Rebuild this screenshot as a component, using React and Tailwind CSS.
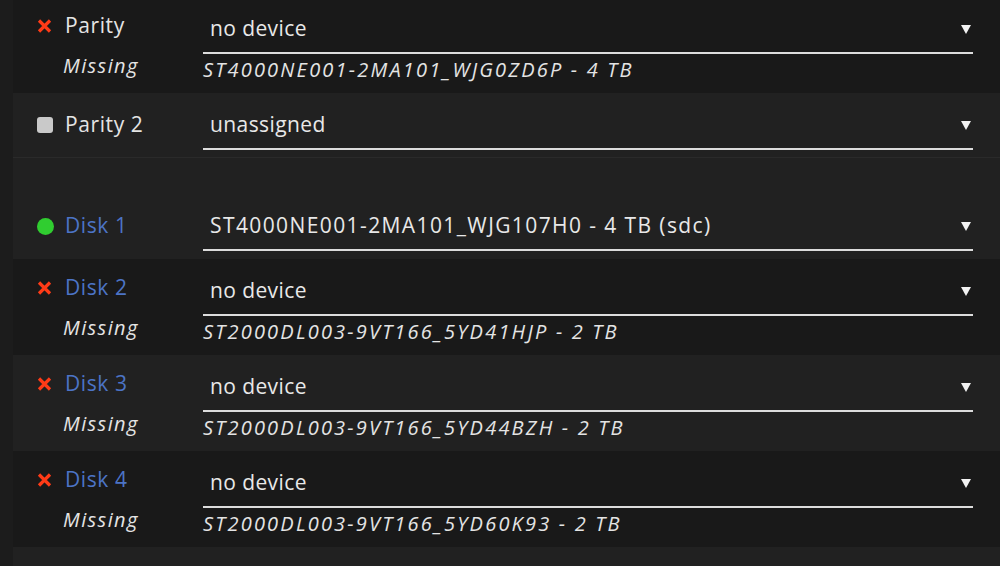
import React from "react";

const rows = [
  { label: "Parity", status: "missing", value: "no device", sub: "ST4000NE001-2MA101_WJG0ZD6P - 4 TB", dark: true },
  { label: "Parity 2", status: "empty", value: "unassigned", light: true, border: true },
  { gap: true },
  { label: "Disk 1", status: "ok", value: "ST4000NE001-2MA101_WJG107H0 - 4 TB (sdc)", named: true, disk: true },
  { label: "Disk 2", status: "missing", value: "no device", sub: "ST2000DL003-9VT166_5YD41HJP - 2 TB", disk: true, dark: true },
  { label: "Disk 3", status: "missing", value: "no device", sub: "ST2000DL003-9VT166_5YD44BZH - 2 TB", disk: true },
  { label: "Disk 4", status: "missing", value: "no device", sub: "ST2000DL003-9VT166_5YD60K93 - 2 TB", disk: true, dark: true },
];

const StatusIcon = ({ status }) => {
  if (status === "missing")
    return (
      <svg width="18" height="14" viewBox="0 0 18 14">
        <path d="M3 1.5 L14 12.5 M14 1.5 L3 12.5" stroke="#ff3b17" strokeWidth="3.2" strokeLinecap="butt" />
      </svg>
    );
  if (status === "empty") return <div className="w-[16px] h-[16px] rounded-[3px] bg-[#c9c9c9]" />;
  return <div className="w-[17px] h-[17px] rounded-full bg-[#30cd30]" />;
};

const Arrow = () => (
  <svg width="10" height="9" viewBox="0 0 10 9">
    <polygon points="0,0 10,0 5,9" fill="#f2f2f2" />
  </svg>
);

const Row = ({ row }) => {
  if (row.gap) return <div className="h-[36px]" />;
  const twoLine = !!row.sub;
  return (
    <div
      className={`flex ${twoLine ? "h-[96px]" : "h-[65px]"} ${row.dark ? "bg-[#191919]" : "bg-[#212121]"} ${
        row.border ? "border-b border-[#2a2a2a]" : ""
      }`}
    >
      <div className={`w-[190px] pl-[23px] ${twoLine ? "pt-[15px]" : "pt-[18px]"}`}>
        <div className="flex items-center h-[28px]">
          <div className="w-[18px] flex justify-center">
            <StatusIcon status={row.status} />
          </div>
          <span
            className={`ml-[11px] text-[21px] tracking-[0.6px] ${row.disk ? "text-[#4c74c6]" : "text-[#e4e4e4]"}`}
          >
            {row.label}
          </span>
        </div>
        {twoLine && (
          <div className="mt-[14px] pl-[27px] italic text-[20px] tracking-[1.4px] leading-[24px] text-[#e4e4e4]">
            Missing
          </div>
        )}
      </div>
      <div className="w-[770px] pt-[18px]">
        <div className="flex items-center justify-between h-[28px] pl-[7px] pr-[2px]">
          <span
            className={`text-[21px] text-[#e8e8e8] whitespace-nowrap ${
              row.named ? "tracking-[1.4px]" : "tracking-[0.4px]"
            }`}
          >
            {row.value}
          </span>
          <Arrow />
        </div>
        <div className="mt-[9px] h-[2px] bg-[#dcdcdc]" />
        {twoLine && (
          <div className="mt-[4px] h-[24px] italic text-[20px] tracking-[2.2px] leading-[24px] text-[#e4e4e4] whitespace-nowrap">
            {row.sub}
          </div>
        )}
      </div>
    </div>
  );
};

export default function App() {
  return (
    <div
      className="flex h-[566px] overflow-hidden bg-[#1c1c1c]"
      style={{ fontFamily: '"Open Sans", sans-serif' }}
    >
      <div className="w-[13px] shrink-0" />
      <div className="flex-1 bg-[#212121] -mt-[3px]">
        {rows.map((row, i) => (
          <Row key={i} row={row} />
        ))}
      </div>
    </div>
  );
}
